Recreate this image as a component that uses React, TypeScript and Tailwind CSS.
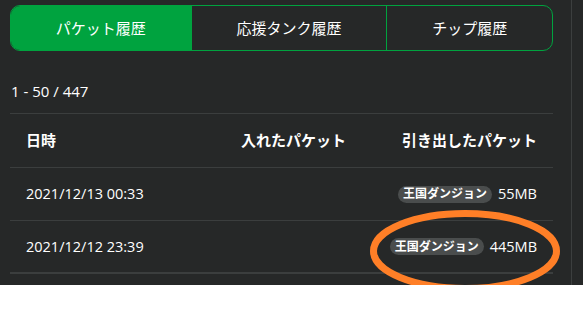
import React from 'react';

const tabs = ['パケット履歴', '応援タンク履歴', 'チップ履歴'];

const rows = [
  { date: '2021/12/13 00:33', place: '王国ダンジョン', size: '55MB' },
  { date: '2021/12/12 23:39', place: '王国ダンジョン', size: '445MB' },
];

function Badge({ children }: { children: React.ReactNode }) {
  return (
    <span className="inline-flex h-[17px] items-center rounded-full bg-[#4a4d4d] px-[5px] text-[12px] font-bold leading-none text-white">
      {children}
    </span>
  );
}

export default function App() {
  return (
    <div className="relative w-[583px] bg-white font-['Open_Sans','Noto_Sans_CJK_JP',sans-serif] text-white">
      <div className="flex h-[285px] bg-[#262828]">
        <div className="w-[572px] border-r border-[#3c3f3f] pl-[10px] pr-[18px] pt-[5px]">
          {/* tabs */}
          <div className="flex h-[46px] overflow-hidden rounded-[10px] border border-[#00a33f]">
            {tabs.map((t, i) => (
              <div
                key={t}
                className={
                  'flex flex-auto items-center justify-center text-[15px] ' +
                  (i === 0 ? 'bg-[#00a33f]' : 'border-l border-[#00a33f]')
                }
              >
                {t}
              </div>
            ))}
          </div>

          <div className="flex h-[62px] items-end pb-[11px] pl-[1px] text-[15px]">1 - 50 / 447</div>

          {/* table */}
          <div className="border-t border-[#3b3e3e]">
            <div className="grid h-[54px] grid-cols-[215px_1fr_auto] items-center border-b border-[#3b3e3e] text-[15px] font-bold">
              <div className="px-4">日時</div>
              <div className="px-4">入れたパケット</div>
              <div className="px-4 text-right">引き出したパケット</div>
            </div>
            {rows.map((r, i) => (
              <div
                key={r.date}
                className={
                  'grid h-[53px] grid-cols-[215px_1fr_auto] items-center text-[14.5px] ' +
                  (i === rows.length - 1 ? 'border-b-2 border-[#3b3e3e]' : 'border-b border-[#3b3e3e]')
                }
              >
                <div className="px-4">{r.date}</div>
                <div className="px-4"></div>
                <div className="flex items-center justify-end gap-[6px] px-4">
                  <Badge>{r.place}</Badge>
                  <span>{r.size}</span>
                </div>
              </div>
            ))}
          </div>
        </div>
      </div>

      {/* hand-drawn highlight */}
      <svg
        className="pointer-events-none absolute left-[370px] top-[210px]"
        width="190"
        height="82"
        viewBox="0 0 190 82"
      >
        <ellipse cx="95" cy="41" rx="91.5" ry="37.5" fill="none" stroke="#ff7f27" strokeWidth="7" />
      </svg>
    </div>
  );
}
